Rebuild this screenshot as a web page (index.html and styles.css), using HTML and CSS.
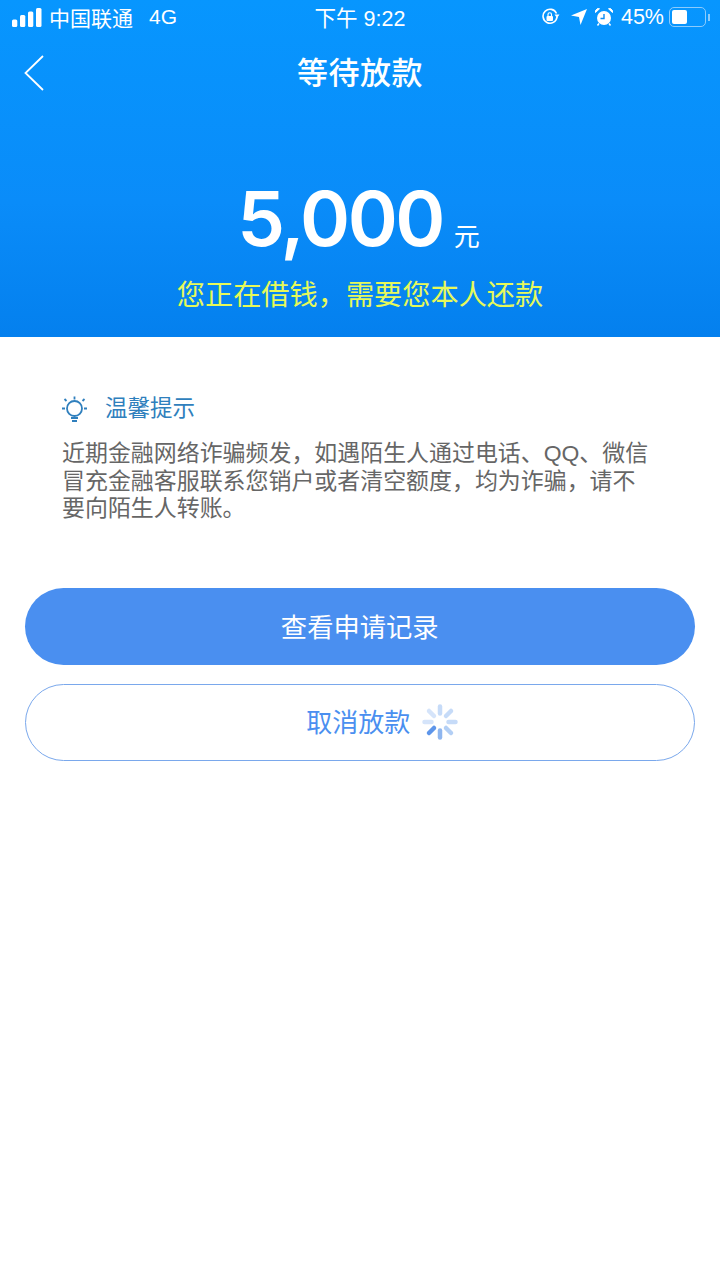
FILE: index.html
```html
<!DOCTYPE html>
<html lang="zh-CN">
<head>
  <meta charset="UTF-8">
  <meta name="viewport" content="width=device-width, initial-scale=1.0">
  <title>等待放款</title>
  <link rel="stylesheet" href="styles.css">
</head>
<body>
  <div class="hero">
    <div class="status">
      <div class="status-left">
        <svg class="signal" width="31" height="19" viewBox="0 0 31 19">
          <rect x="0" y="11.500" width="5.300" height="7.500" rx="1.500"/>
          <rect x="8" y="7" width="5.300" height="12" rx="1.500"/>
          <rect x="16" y="3.500" width="5.300" height="15.500" rx="1.500"/>
          <rect x="24" y="0" width="5.500" height="19" rx="1.500"/>
        </svg>
        <span class="carrier">中国联通</span>
        <span class="net">4G</span>
      </div>
      <div class="status-time">下午 9:22</div>
      <div class="status-right">
        <svg class="lock" width="19" height="18" viewBox="0 0 19 18">
          <path d="M15.500 5.500A7 7 0 1 0 16 9" fill="none" stroke="#fff" stroke-width="1.600"/>
          <path d="M13.500 6.500h5l-2.500 3.500z" fill="#fff"/>
          <rect x="5.500" y="8" width="6.500" height="5" rx="1" fill="#fff"/>
          <path d="M7 8V6.500a1.700 1.700 0 0 1 3.500 0V8" fill="none" stroke="#fff" stroke-width="1.200"/>
        </svg>
        <svg width="16" height="16" viewBox="0 0 16 16">
          <path d="M16 0L9.500 16 8 8 0 6.500z" fill="#fff"/>
        </svg>
        <svg width="18" height="18" viewBox="0 0 18 18">
          <circle cx="9" cy="10" r="7" fill="#fff"/>
          <path d="M9 6v4.500H5.500" fill="none" stroke="#0a8cf5" stroke-width="1.400"/>
          <path d="M0.500 4.500L4.500 0.800 2.500 0.500 0.500 2.500zM17.500 4.500L13.500 0.800 15.500 0.500 17.500 2.500z" fill="#fff" stroke="#fff"/>
          <path d="M4 15.500l-1.500 2M14 15.500l1.500 2" stroke="#fff" stroke-width="1.500"/>
        </svg>
        <span class="pct">45%</span>
        <div class="battery">
          <div class="battery-body"><div class="battery-fill"></div></div>
          <div class="battery-tip"></div>
        </div>
      </div>
    </div>
    <div class="nav">
      <svg class="back" width="22" height="38" viewBox="0 0 22 38">
        <path d="M20 2L2.500 19 20 36" fill="none" stroke="#fff" stroke-width="1.800"/>
      </svg>
      <h1>等待放款</h1>
    </div>
    <div class="amount"><span class="num">5,000</span><span class="unit">元</span></div>
    <div class="notice">您正在借钱，需要您本人还款</div>
  </div>

  <div class="tip">
    <div class="tip-head">
      <svg width="28" height="28" viewBox="0 0 28 28">
        <circle cx="13.500" cy="13.500" r="7.500" fill="none" stroke="#2f7fbd" stroke-width="1.800"/>
        <path d="M10 23h7M11 26h5M13.500 1.500v3M3.500 4l2 2M23.500 4l-2 2M1 13.500h3M23 13.500h3" fill="none" stroke="#2f7fbd" stroke-width="1.800"/>
      </svg>
      <span>温馨提示</span>
    </div>
    <p>近期金融网络诈骗频发，如遇陌生人通过电话、QQ、微信冒充金融客服联系您销户或者清空额度，均为诈骗，请不要向陌生人转账。</p>
  </div>

  <div class="actions">
    <button class="btn primary">查看申请记录</button>
    <button class="btn outline">取消放款
      <svg class="spinner" width="36" height="36" viewBox="0 0 36 36">
        <g fill="none" stroke-width="4.500" stroke-linecap="round">
          <path d="M18 2.500v7" stroke="#c6dbf8"/>
          <path d="M29 7l-5 5" stroke="#c6dbf8"/>
          <path d="M33.500 18h-7" stroke="#c6dbf8"/>
          <path d="M29 29l-5-5" stroke="#b3cff5"/>
          <path d="M18 33.500v-7" stroke="#8fb6ef"/>
          <path d="M7 29l5-5" stroke="#5d95ea"/>
          <path d="M2.500 18h7" stroke="#d5e4fa"/>
          <path d="M7 7l5 5" stroke="#d5e4fa"/>
        </g>
      </svg>
    </button>
  </div>
</body>
</html>
```

FILE: styles.css
```css
* {
  box-sizing: border-box;
}
body {
  margin: 0;
  width: 720px;
  min-height: 1280px;
  background: #ffffff;
  font-family: "Liberation Sans", "Noto Sans CJK SC", sans-serif;
}
.hero {
  height: 337px;
  background: linear-gradient(to bottom, #0796fe, #0a8cf9 60%, #0480ee);
  color: #ffffff;
}
.status {
  height: 36px;
  display: flex;
  align-items: center;
  justify-content: space-between;
  padding: 0 10px 2px 12px;
  position: relative;
  font-size: 21px;
}
.status-left {
  display: flex;
  align-items: center;
}
.signal {
  fill: #ffffff;
  margin-right: 6px;
}
.net {
  margin-left: 16px;
}
.status-time {
  position: absolute;
  left: 0;
  right: 0;
  margin-top: -2px;
  text-align: center;
  font-size: 21.500px;
}
.status-right {
  display: flex;
  align-items: center;
  gap: 8px;
}
.lock {
  margin-right: 3px;
}
.pct {
  font-size: 21.500px;
  margin-top: 1px;
}
.battery {
  display: flex;
  align-items: center;
  margin-left: -3px;
}
.battery-body {
  width: 37px;
  height: 20px;
  border: 1.500px solid #8ccbfc;
  border-radius: 5px;
  padding: 2px;
}
.battery-fill {
  width: 15px;
  height: 100%;
  background: #ffffff;
  border-radius: 2px;
}
.battery-tip {
  width: 2px;
  height: 7px;
  margin-left: 2px;
  background: #8ccbfc;
}
.nav {
  height: 74px;
  padding-bottom: 6px;
  display: flex;
  align-items: center;
  justify-content: center;
  position: relative;
}
.back {
  position: absolute;
  left: 23px;
  top: 18px;
}
h1 {
  margin: 0;
  font-size: 31px;
  font-weight: 500;
  letter-spacing: 0.500px;
}
.amount {
  margin-top: 63px;
  height: 90px;
  padding-right: 3px;
  display: flex;
  align-items: baseline;
  justify-content: center;
  line-height: 90px;
}
.num {
  font-family: Inter, "Liberation Sans", sans-serif;
  font-size: 76px;
  font-weight: 600;
  letter-spacing: -2.600px;
}
.unit {
  font-size: 26px;
  margin-left: 11px;
}
.notice {
  margin-top: 11px;
  text-align: center;
  font-size: 28.200px;
  line-height: 42px;
  color: #e6f95a;
}
.tip {
  padding: 56px 64px 0 62px;
}
.tip-head {
  display: flex;
  align-items: center;
  gap: 16px;
  margin-left: -1px;
  font-size: 22.500px;
  line-height: 32px;
  color: #2f7fbd;
}
.tip p {
  margin: 15px 0 0;
  font-size: 22.950px;
  line-height: 27.500px;
  color: #666666;
}
.actions {
  padding: 65px 25px 0 24.500px;
  display: flex;
  flex-direction: column;
  gap: 19px;
}
.btn {
  height: 77px;
  padding-bottom: 2px;
  border-radius: 38.500px;
  font-family: inherit;
  font-size: 26.300px;
  display: flex;
  align-items: center;
  justify-content: center;
}
.primary {
  background: #4a8ff0;
  border: none;
  color: #ffffff;
}
.outline {
  position: relative;
  padding: 0 3px 3px 0;
  background: #ffffff;
  border: 1px solid #7aa8ec;
  color: #4a8ff0;
  font-size: 26px;
}
.spinner {
  position: absolute;
  left: 396px;
  top: 19px;
}
```
